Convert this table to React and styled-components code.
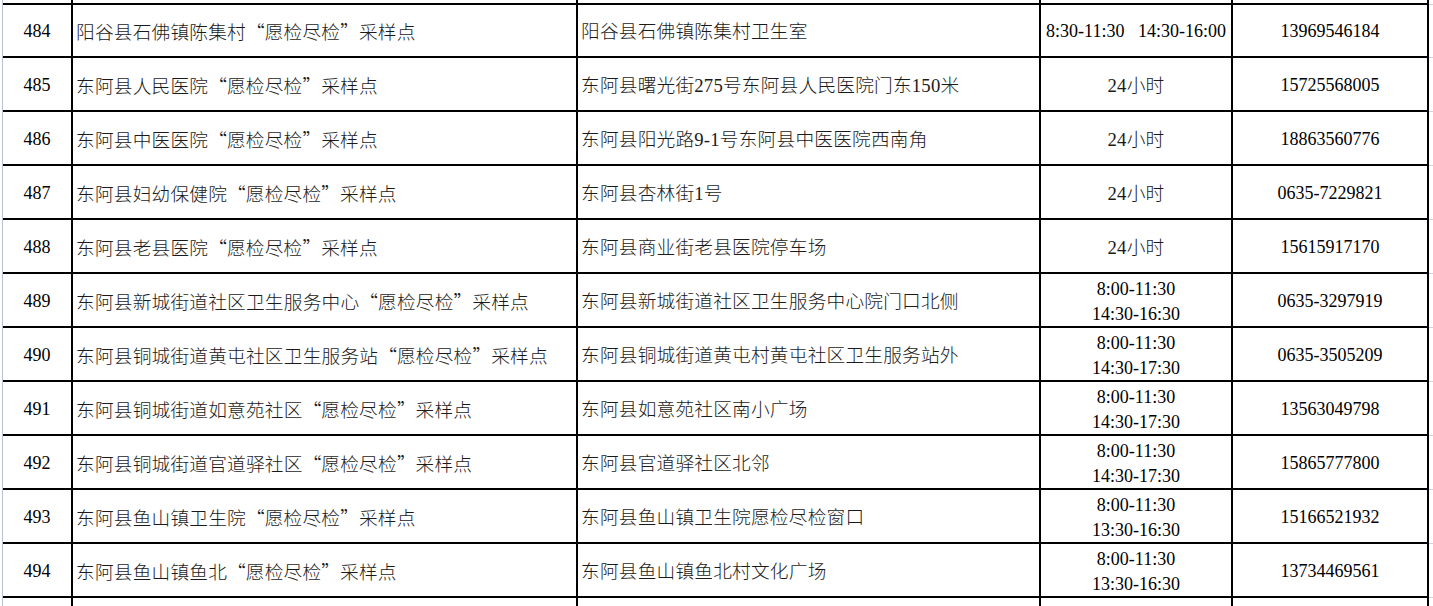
import React from 'react';
import styled, { createGlobalStyle } from 'styled-components';

const GlobalStyle = createGlobalStyle`
  html, body {
    margin: 0;
    padding: 0;
    background: #fff;
    overflow: hidden;
  }
  body {
    font-family: "Liberation Serif", "Noto Sans CJK SC", serif;
    color: #000;
  }
`;

const Sheet = styled.div`
  margin-left: 2px;
  border-left: 1px solid #b7bfd9;
  height: 606px;
  overflow: hidden;
  display: flex;
  flex-direction: column;
`;

const Row = styled.div`
  display: grid;
  grid-template-columns: 70px 505px 463px 192px 196px 1fr;
  flex: ${p => (p.$fill ? '1' : 'none')};
  height: ${p => (p.$fill ? 'auto' : `${p.$h}px`)};
`;

const Cell = styled.div`
  box-sizing: border-box;
  min-width: 0;
  border-right: 2px solid #000;
  border-bottom: ${p => (p.$open ? 'none' : '2px solid #000')};
  display: flex;
  flex-direction: column;
  justify-content: center;
  align-items: ${p => (p.$left ? 'flex-start' : 'center')};
  padding-left: ${p => (p.$left ? '3px' : '0')};
  padding-top: 3px;
  white-space: pre;
  overflow: hidden;
`;

const Gutter = styled.div`
  box-sizing: border-box;
  border-bottom: ${p => (p.$open ? 'none' : '1px solid #cfd2dc')};
`;

const Num = styled.span`
  font-size: 18px;
  line-height: 25px;
`;

const Words = styled.span`
  font-size: 18.7px;
  letter-spacing: 0.2px;
  line-height: 25px;
  font-weight: 300;
  color: #1a1a1a;
`;

const Quote = styled.span`
  display: inline-block;
  width: 1em;
  font-family: "Noto Sans CJK SC", sans-serif;
  text-align: ${p => (p.$close ? 'left' : 'right')};
`;

const rows = [
  ['484', '阳谷县石佛镇陈集村“愿检尽检”采样点', '阳谷县石佛镇陈集村卫生室', ['8:30-11:30   14:30-16:00'], '13969546184'],
  ['485', '东阿县人民医院“愿检尽检”采样点', '东阿县曙光街275号东阿县人民医院门东150米', ['24小时'], '15725568005'],
  ['486', '东阿县中医医院“愿检尽检”采样点', '东阿县阳光路9-1号东阿县中医医院西南角', ['24小时'], '18863560776'],
  ['487', '东阿县妇幼保健院“愿检尽检”采样点', '东阿县杏林街1号', ['24小时'], '0635-7229821'],
  ['488', '东阿县老县医院“愿检尽检”采样点', '东阿县商业街老县医院停车场', ['24小时'], '15615917170'],
  ['489', '东阿县新城街道社区卫生服务中心“愿检尽检”采样点', '东阿县新城街道社区卫生服务中心院门口北侧', ['8:00-11:30', '14:30-16:30'], '0635-3297919'],
  ['490', '东阿县铜城街道黄屯社区卫生服务站“愿检尽检”采样点', '东阿县铜城街道黄屯村黄屯社区卫生服务站外', ['8:00-11:30', '14:30-17:30'], '0635-3505209'],
  ['491', '东阿县铜城街道如意苑社区“愿检尽检”采样点', '东阿县如意苑社区南小广场', ['8:00-11:30', '14:30-17:30'], '13563049798'],
  ['492', '东阿县铜城街道官道驿社区“愿检尽检”采样点', '东阿县官道驿社区北邻', ['8:00-11:30', '14:30-17:30'], '15865777800'],
  ['493', '东阿县鱼山镇卫生院“愿检尽检”采样点', '东阿县鱼山镇卫生院愿检尽检窗口', ['8:00-11:30', '13:30-16:30'], '15166521932'],
  ['494', '东阿县鱼山镇鱼北“愿检尽检”采样点', '东阿县鱼山镇鱼北村文化广场', ['8:00-11:30', '13:30-16:30'], '13734469561'],
];

// full-width quotes like the sheet's song font
const withQuotes = text =>
  text.split(/([“”])/).map((part, i) =>
    part === '“' ? <Quote key={i}>“</Quote> :
    part === '”' ? <Quote key={i} $close>”</Quote> :
    part
  );

const EmptyRow = ({ h, fill, open }) => (
  <Row $h={h} $fill={fill}>
    {[0, 1, 2, 3, 4].map(i => <Cell key={i} $open={open} />)}
    <Gutter $open={open} />
  </Row>
);

export default function App() {
  return (
    <>
      <GlobalStyle />
      <Sheet>
        <EmptyRow h={4} />
        {rows.map(([no, site, addr, hours, phone]) => (
          <Row key={no} $h={54}>
            <Cell><Num>{no}</Num></Cell>
            <Cell $left><Words>{withQuotes(site)}</Words></Cell>
            <Cell $left><Words>{addr}</Words></Cell>
            <Cell>
              {hours.map(h => (
                /[\u4e00-\u9fff]/.test(h) ? <Words key={h}>{h}</Words> : <Num key={h}>{h}</Num>
              ))}
            </Cell>
            <Cell><Num>{phone}</Num></Cell>
            <Gutter />
          </Row>
        ))}
        <EmptyRow fill open />
      </Sheet>
    </>
  );
}
